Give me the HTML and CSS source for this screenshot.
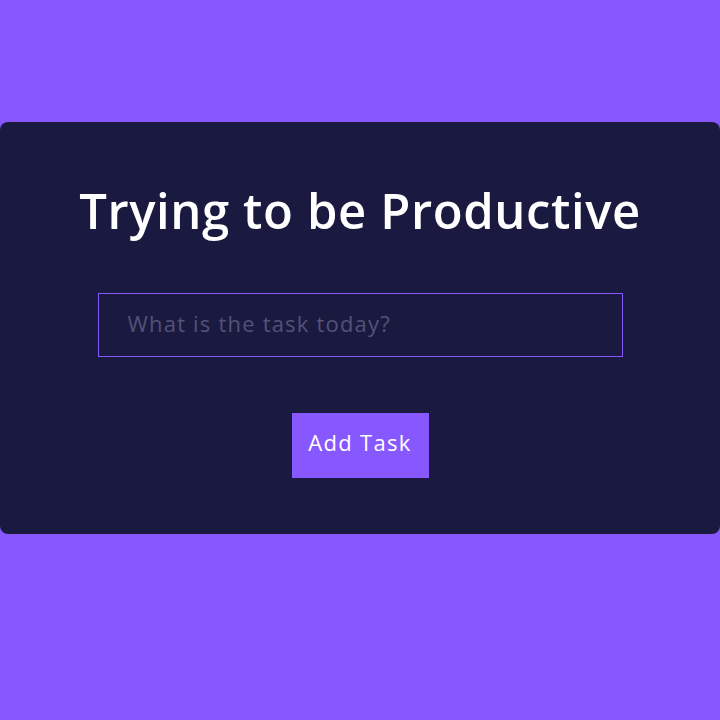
FILE: index.html
```html
<!DOCTYPE html>
<html>
<head>
<meta charset="utf-8">
<link rel="stylesheet" href="styles.css">
</head>
<body>
<div class="wrapper">
  <h1 class="title">Trying to be Productive</h1>
  <form class="todo-form">
    <input class="todo-input" type="text" placeholder="What is the task today?">
    <button class="todo-btn" type="button">Add Task</button>
  </form>
</div>
</body>
</html>
```
FILE: styles.css
```css
html, body {
  margin: 0;
  padding: 0;
  background: #8758ff;
  height: 100%;
}
body {
  font-family: "Open Sans", "Inter", sans-serif;
}
.wrapper {
  margin-top: 122px;
  height: 412px;
  box-sizing: border-box;
  background: #1a1a40;
  border-radius: 8px;
  display: flex;
  flex-direction: column;
  align-items: center;
  padding: 0;
}
.title {
  margin: 56px 0 0;
  color: #fff;
  font-size: 49px;
  font-weight: 600;
  line-height: 64px;
  letter-spacing: 0.6px;
}
.todo-form {
  display: flex;
  flex-direction: column;
  align-items: center;
  margin-top: 51px;
}
.todo-input {
  box-sizing: border-box;
  width: 525px;
  height: 64px;
  background: transparent;
  border: 1px solid #8758ff;
  outline: none;
  color: #fff;
  padding: 0 29px 4px;
  font-family: inherit;
  font-size: 22px;
  letter-spacing: 1.2px;
}
.todo-input::placeholder {
  color: #525178;
}
.todo-btn {
  margin-top: 56px;
  width: 137px;
  height: 65px;
  padding: 0 0 7px;
  background: #8758ff;
  border: none;
  color: #fff;
  font-family: inherit;
  font-size: 22px;
  letter-spacing: 1.3px;
  cursor: pointer;
}
```
